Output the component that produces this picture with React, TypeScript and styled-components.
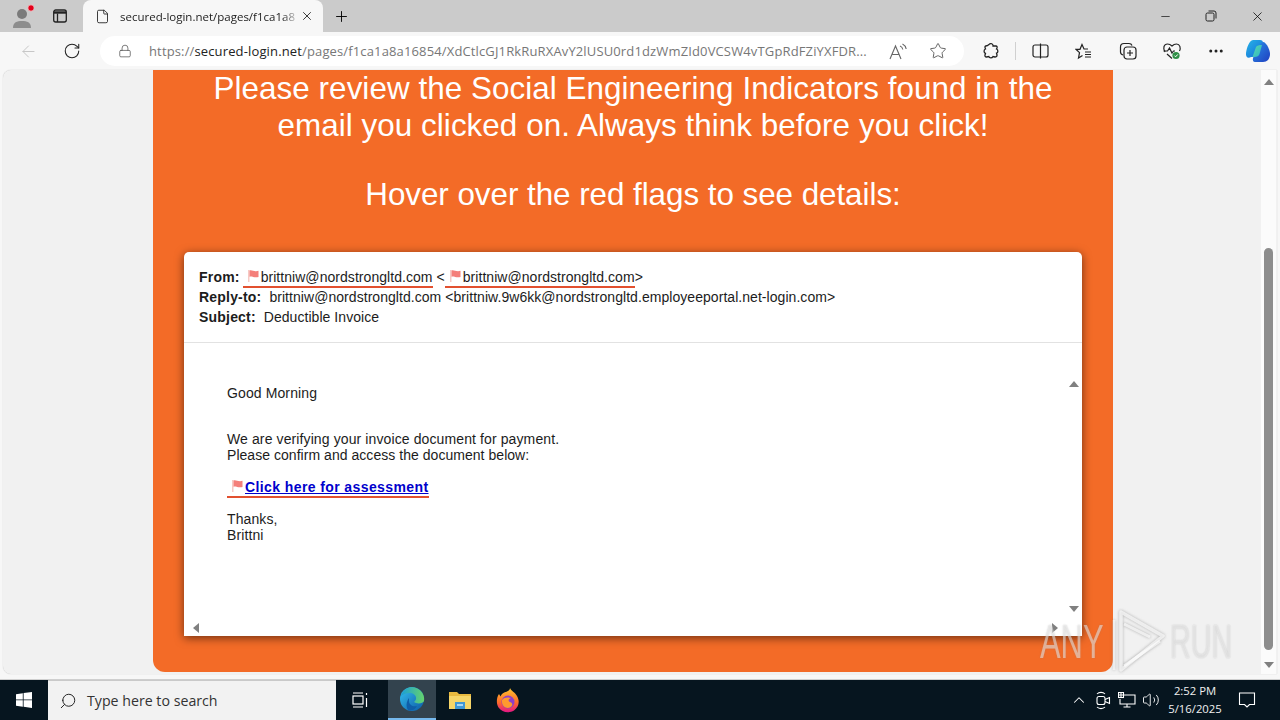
import React from 'react';
import styled, { createGlobalStyle } from 'styled-components';
import { ArrowLeft, RotateCw, Lock, Star, File, X, Plus, Minus, Search, MoreHorizontal, ChevronUp, Volume2 } from 'lucide-react';

const GlobalStyle = createGlobalStyle`
  html, body { margin: 0; padding: 0; width: 1280px; height: 720px; overflow: hidden; }
  body { font-family: 'Liberation Sans', Arial, sans-serif; background: #f7f7f7; }
  * { box-sizing: border-box; }
`;

const Screen = styled.div`
  width: 1280px;
  height: 720px;
  display: flex;
  flex-direction: column;
  position: relative;
`;

const TabStrip = styled.div`
  height: 32px;
  background: #cbcbcb;
  display: flex;
  align-items: flex-end;
  flex-shrink: 0;
`;

const ProfileSlot = styled.div`
  width: 44px;
  height: 32px;
  display: flex;
  align-items: center;
  justify-content: center;
`;

const TabActionsSlot = styled.div`
  width: 39px;
  height: 32px;
  display: flex;
  align-items: center;
  padding-left: 8px;
`;

const Tab = styled.div`
  width: 240px;
  height: 32px;
  background: #f7f7f7;
  border-radius: 8px 8px 0 0;
  display: flex;
  align-items: center;
  padding: 0 9px 0 12px;
  color: #222;
`;

const TabTitle = styled.span`
  flex: 1;
  margin-left: 10px;
  font-family: 'Open Sans', sans-serif;
  font-size: 11.5px;
  white-space: nowrap;
  -webkit-mask-image: linear-gradient(to right, #000 90%, transparent 100%);
  mask-image: linear-gradient(to right, #000 90%, transparent 100%);
`;

const NewTab = styled.div`
  width: 36px;
  height: 32px;
  display: flex;
  align-items: center;
  justify-content: center;
`;

const WindowControls = styled.div`
  margin-left: auto;
  display: flex;
  height: 32px;
  align-items: center;
`;

const WindowButton = styled.div`
  width: 46px;
  height: 32px;
  display: flex;
  align-items: center;
  justify-content: center;
`;

const Toolbar = styled.div`
  height: 38px;
  background: #f7f7f7;
  display: flex;
  align-items: center;
  flex-shrink: 0;
  padding-left: 6px;
`;

const NavButton = styled.div`
  width: 44px;
  height: 32px;
  display: flex;
  align-items: center;
  justify-content: center;
`;

const AddressBar = styled.div`
  width: 864px;
  height: 30px;
  margin-left: 6px;
  margin-right: 8px;
  border-radius: 15px;
  background: #fff;
  display: flex;
  align-items: center;
  padding-left: 18px;
`;

const Url = styled.span`
  margin-left: 17px;
  width: 726px;
  font-family: 'Open Sans', sans-serif;
  font-size: 13px;
  letter-spacing: 0.14px;
  color: #777;
  white-space: nowrap;
`;

const UrlHost = styled.span`
  color: #222;
`;

const ReadAloudSlot = styled.div`
  margin-left: 13px;
  width: 20px;
  display: flex;
  align-items: center;
  justify-content: center;
`;

const StarSlot = styled.div`
  margin-left: 21px;
  display: flex;
`;

const ToolbarIcons = styled.div`
  display: flex;
  align-items: center;
  flex: 1;
`;

const ToolSlot = styled.div<{ $w: number }>`
  width: ${({ $w }) => $w}px;
  height: 32px;
  display: flex;
  align-items: center;
  justify-content: center;
`;

const Divider = styled.div`
  width: 1px;
  height: 18px;
  margin-left: 5px;
  background: #d0d0d0;
`;

const Viewport = styled.div`
  flex: 1;
  display: flex;
  min-height: 0;
  background: #f7f7f7;
  padding: 0 3px 5px;
  border-bottom: 1px solid #cfcfcf;
`;

const Page = styled.div`
  flex: 1;
  background: #f1f1f1;
  border-radius: 8px 0 0 8px;
  padding-left: 150px;
  display: flex;
  overflow: hidden;
  box-shadow: 0 0 1px #bbb;
`;

const OrangePanel = styled.div`
  width: 960px;
  height: 602px;
  background: #f36b27;
  border-radius: 0 0 12px 12px;
  padding: 0 31px;
  display: flex;
  flex-direction: column;
`;

const Headline = styled.div`
  color: #fff;
  font-size: 31.4px;
  line-height: 37px;
  text-align: center;
  height: 182px;
  letter-spacing: 0.05px;
`;

const HeadlineGap = styled.div`
  height: 32px;
`;

const HoverLine = styled.div`
  letter-spacing: -0.05px;
`;

const EmailCard = styled.div`
  width: 898px;
  height: 384px;
  background: #fff;
  border-radius: 5px 5px 0 0;
  box-shadow: 0 2px 10px rgba(0, 0, 0, 0.55);
  display: flex;
  flex-direction: column;
  color: #1c1c1c;
`;

const EmailHeader = styled.div`
  height: 91px;
  border-bottom: 1px solid #e2e2e2;
  padding: 15px 15px 0;
  font-size: 14px;
  line-height: 20px;
  letter-spacing: 0.05px;
`;

const HeaderLine = styled.div`
  white-space: nowrap;
  height: 20px;
`;

const HeaderLabel = styled.b<{ $gap?: number }>`
  letter-spacing: 0.2px;
  margin-right: ${({ $gap = 4 }) => $gap}px;
`;

const FlaggedText = styled.span`
  display: inline-block;
  line-height: 18px;
  height: 20px;
  border-bottom: 2px solid #e2502f;
  padding-left: 4px;
`;

const FlagIcon = styled.svg`
  width: 13px;
  height: 14px;
  margin-right: 1px;
  vertical-align: -1px;
`;

const EmailBodyWrap = styled.div`
  flex: 1;
  position: relative;
  padding: 42px 43px 0;
  font-size: 14px;
  line-height: 16px;
  letter-spacing: 0.11px;
`;

const BodyBlock = styled.div<{ $gap: number }>`
  margin-bottom: ${({ $gap }) => $gap}px;
`;

const TightLine = styled.div`
  letter-spacing: 0.04px;
`;

const FlaggedLink = styled.span`
  display: inline-block;
  height: 19px;
  line-height: 16px;
  border-bottom: 2px solid #e2502f;
  padding-left: 4px;
`;

const BlueLink = styled.a`
  color: #0000cc;
  font-weight: bold;
  letter-spacing: 0.4px;
  text-decoration: underline;
`;

const Arrow = styled.div<{ $dir: 'up' | 'down' | 'left' | 'right' }>`
  position: absolute;
  width: 0;
  height: 0;
  ${({ $dir }) =>
    $dir === 'up'
      ? 'border-left:5px solid transparent;border-right:5px solid transparent;border-bottom:6px solid #808080;'
      : $dir === 'down'
      ? 'border-left:5px solid transparent;border-right:5px solid transparent;border-top:6px solid #808080;'
      : $dir === 'left'
      ? 'border-top:5px solid transparent;border-bottom:5px solid transparent;border-right:6px solid #808080;'
      : 'border-top:5px solid transparent;border-bottom:5px solid transparent;border-left:6px solid #808080;'}
`;

const InnerUp = styled(Arrow)`
  right: 3px;
  top: 38px;
`;

const InnerDown = styled(Arrow)`
  right: 3px;
  top: 263px;
`;

const InnerLeft = styled(Arrow)`
  left: 9px;
  bottom: 3px;
`;

const InnerRight = styled(Arrow)`
  right: 24px;
  bottom: 3px;
`;

const Scrollbar = styled.div`
  width: 15px;
  margin-left: auto;
  margin-right: 1px;
  position: relative;
  display: flex;
  flex-direction: column;
  align-items: center;
  background: #fbfbfb;
`;

const ScrollUp = styled(Arrow)`
  top: 9px;
`;

const ScrollDown = styled(Arrow)`
  bottom: 6px;
`;

const ScrollThumb = styled.div`
  position: absolute;
  top: 178px;
  width: 9px;
  height: 402px;
  left: 3px;
  background: #8d8d8d;
  border-radius: 5px;
`;

const Taskbar = styled.div`
  height: 40px;
  background: #06151f;
  display: flex;
  align-items: center;
  color: #fff;
  flex-shrink: 0;
`;

const StartButton = styled.div`
  width: 48px;
  height: 40px;
  display: flex;
  align-items: center;
  justify-content: center;
`;

const SearchBox = styled.div`
  width: 288px;
  height: 40px;
  background: #f2f2f2;
  border-top: 1px solid #c9c9c9;
  display: flex;
  align-items: center;
  padding-left: 11px;
  color: #222;
`;

const SearchGlass = styled(Search)`
  transform: scaleX(-1);
`;

const SearchText = styled.span`
  margin-left: 10px;
  font-family: 'Open Sans', sans-serif;
  font-size: 14.2px;
  color: #333;
`;

const TaskSlot = styled.div<{ $active?: boolean; $after?: number }>`
  width: 48px;
  height: 40px;
  margin-right: ${({ $after = 0 }) => $after}px;
  display: flex;
  align-items: center;
  justify-content: center;
  background: ${({ $active }) => ($active ? '#33434e' : 'transparent')};
  border-bottom: ${({ $active }) => ($active ? '2px solid #76b9ed' : 'none')};
`;

const Tray = styled.div`
  margin-left: auto;
  display: flex;
  align-items: center;
  height: 40px;
  padding-right: 13px;
`;

const TraySlot = styled.div<{ $w: number }>`
  width: ${({ $w }) => $w}px;
  height: 40px;
  display: flex;
  align-items: center;
  justify-content: center;
`;

const Clock = styled.div`
  width: 64px;
  text-align: center;
  font-family: 'Open Sans', sans-serif;
  font-size: 11.3px;
  line-height: 18px;
  color: #f0f0f0;
`;

const Watermark = styled.div`
  position: absolute;
  left: 1040px;
  top: 607px;
  height: 68px;
  display: flex;
  align-items: center;
  pointer-events: none;
`;

const WatermarkText = styled.span`
  font-family: 'Liberation Sans', sans-serif;
  font-size: 49px;
  transform: scaleX(0.63);
  transform-origin: left center;
  width: 63px;
  color: rgba(255, 255, 255, 0.45);
  text-shadow: 0 0 2px rgba(130, 130, 130, 0.4);
`;

const WatermarkRun = styled(WatermarkText)`
  margin-left: 4px;
  transform: scaleX(0.585);
`;

const WatermarkMark = styled.svg`
  margin-left: 9px;
  width: 54px;
  height: 66px;
  filter: drop-shadow(0 0 1.5px rgba(110, 110, 110, 0.7));
`;

const Flag = () => (
  <FlagIcon viewBox="0 0 13 14">
    <rect x="1" y="1" width="1.5" height="12" fill="#f6c9c4" />
    <path d="M2.5 1.5 C5 0.5 7 3 11.5 1.8 L11.5 8 C7 9.2 5 6.8 2.5 7.8 Z" fill="#f47f7a" />
  </FlagIcon>
);

const Avatar = () => (
  <svg width="24" height="26" viewBox="0 0 24 26">
    <circle cx="12" cy="11" r="5" fill="#7b7b7b" />
    <path d="M3 25 C3 19 7 18 12 18 C17 18 21 19 21 25 Z" fill="#8d8d8d" />
    <circle cx="21" cy="5" r="3.2" fill="#e3001b" stroke="#f3d0d0" strokeWidth="0.8" />
  </svg>
);

const TabsIcon = () => (
  <svg width="16" height="16" viewBox="0 0 16 16" fill="none" stroke="#222" strokeWidth="1.3">
    <rect x="1.7" y="2" width="12.6" height="12" rx="2" />
    <path d="M2 4.5 H14" strokeWidth="2.4" />
    <path d="M5.5 5.5 V14" />
  </svg>
);

const RestoreIcon = () => (
  <svg width="12" height="12" viewBox="0 0 12 12" fill="none" stroke="#222" strokeWidth="1">
    <rect x="1" y="3" width="8" height="8" rx="1.5" />
    <path d="M3.5 1 H9 A2 2 0 0 1 11 3 V8.5" />
  </svg>
);

const ReadAloudIcon = () => (
  <svg width="19" height="17" viewBox="0 0 19 17" fill="none" stroke="#666" strokeWidth="1.1">
    <path d="M1 16 L6.5 3 L12 16 M3 11.5 H10" />
    <path d="M11 3 C12.500 3.500 13.500 4.800 13.800 6.500 M13.500 1 C15.500 2 16.800 3.800 17.200 6" />
  </svg>
);

const ExtensionIcon = () => (
  <svg width="18" height="18" viewBox="0 0 18 18" fill="none" stroke="#222" strokeWidth="1.3">
    <path d="M7 2.5 C8 1 10.5 1.3 11 3.2 L11 4 L14 4 C15 4 15.3 5 15 6 L14.5 7 C16.3 7.8 16.3 10.5 14.5 11.2 L15 13 C15.2 14.5 14 15 13 15 L11 14.6 C10 16.3 7.5 16.3 6.8 14.6 L4.5 15 C3.2 15 2.7 14 3 13 L3.5 11.3 C1.6 10.5 1.6 7.8 3.5 7 L3 5.5 C2.8 4.3 3.7 3.6 5 3.8 Z" />
  </svg>
);

const SplitIcon = () => (
  <svg width="17" height="16" viewBox="0 0 17 16" fill="none" stroke="#222" strokeWidth="1.2">
    <rect x="1" y="2" width="15" height="12" rx="2" />
    <path d="M8.5 0.5 V15.5" />
  </svg>
);

const FavoritesIcon = () => (
  <svg width="18" height="17" viewBox="0 0 18 17" fill="none" stroke="#222" strokeWidth="1.2">
    <path d="M13 6 L9 6 L7 1.5 L5 6.300 L1 6.300 L4.500 9.600 L3.500 15 L7.500 12.500" />
    <path d="M10 9 H16 M10 11.500 H16 M10 14 H16" />
  </svg>
);

const CollectionsIcon = () => (
  <svg width="18" height="18" viewBox="0 0 18 18" fill="none" stroke="#222" strokeWidth="1.2">
    <path d="M4 13 C2 12.5 1.5 11.5 1.5 10 V5 C1.5 3 3 1.5 5 1.5 H10 C11.5 1.5 12.5 2 13 3.5" />
    <rect x="5" y="5" width="12" height="12" rx="3" />
    <path d="M11 8 V14 M8 11 H14" />
  </svg>
);

const HealthIcon = () => (
  <svg width="20" height="18" viewBox="0 0 20 18" fill="none">
    <path d="M3 10 C0.5 6 2 2 5.5 2 C7.5 2 9 3 10 4 C11 3 12.5 2 14.5 2 C18 2 19 6 17.5 9 M5 12 L10 16.5" stroke="#222" strokeWidth="1.2" />
    <path d="M1.5 9 H5.5 L7.5 6 L10 11 L11.5 9 H13" stroke="#222" strokeWidth="1.2" />
    <circle cx="14" cy="13.5" r="3.6" fill="#2f8f46" />
    <path d="M12.4 13.6 L13.6 14.8 L15.8 12.4" stroke="#fff" strokeWidth="1" />
  </svg>
);

const CopilotIcon = () => (
  <svg width="26" height="24" viewBox="0 0 26 24">
    <defs>
      <linearGradient id="cpA" x1="0" y1="0" x2="1" y2="1">
        <stop offset="0" stopColor="#27b5e6" />
        <stop offset="1" stopColor="#1668d8" />
      </linearGradient>
      <linearGradient id="cpB" x1="0" y1="0" x2="1" y2="1">
        <stop offset="0" stopColor="#2a8fe8" />
        <stop offset="1" stopColor="#1f3fc0" />
      </linearGradient>
      <linearGradient id="cpC" x1="0" y1="0" x2="1" y2="1">
        <stop offset="0" stopColor="#59d7a8" />
        <stop offset="1" stopColor="#2fb6c8" />
      </linearGradient>
    </defs>
    <path d="M8 1 H15 C17 1 18 2 18 4 L14 18 H6 C3 20 0.500 18 1 14 C2 8 4 2 8 1 Z" fill="url(#cpA)" />
    <path d="M19 3 C22 5 25 11 25 15 C25 20 22 23 18 23 H10 C8 23 7.500 21 8 19 L13 8 C15 5 17 3 19 3 Z" fill="url(#cpB)" />
    <path d="M11 8 C12 6.500 14 6 17 6 L14.500 15 C14 17 12 18 9.500 18 H7.500 Z" fill="url(#cpC)" />
  </svg>
);

const WindowsLogo = () => (
  <svg width="16" height="16" viewBox="0 0 16 16" fill="#fff">
    <path d="M0 2.2 L6.8 1.2 V7.500 H0 Z M7.600 1.100 L16 0 V7.500 H7.600 Z M0 8.300 H6.800 V14.700 L0 13.800 Z M7.600 8.300 H16 V16 L7.600 14.800 Z" />
  </svg>
);

const TaskViewIcon = () => (
  <svg width="18" height="18" viewBox="0 0 18 18" fill="none" stroke="#fff" strokeWidth="1.200">
    <rect x="2" y="5" width="10" height="8" />
    <path d="M2 2 H12 M2 16 H12 M15.500 2 V4 M15.500 7 V16" />
  </svg>
);

const EdgeIcon = () => (
  <svg width="26" height="26" viewBox="0 0 26 26">
    <defs>
      <linearGradient id="edA" x1="0" y1="0" x2="1" y2="1">
        <stop offset="0" stopColor="#35c1f1" />
        <stop offset="1" stopColor="#0c59a4" />
      </linearGradient>
      <linearGradient id="edB" x1="0" y1="0" x2="1" y2="0">
        <stop offset="0" stopColor="#1a9ed8" />
        <stop offset="1" stopColor="#66d36b" />
      </linearGradient>
    </defs>
    <circle cx="13" cy="13" r="12" fill="url(#edA)" />
    <path d="M2 10 C4 2 12 0 17 2 C23 4 26 10 25 15 C24 18 17 18 15 16 C19 13 17 8 12 7 C8 6.500 4 8 2 10 Z" fill="url(#edB)" />
    <path d="M10 15 C10 19 14 21 18 20 C16 24 12 25.500 9 24 C7 21 7 16 10 12 Z" fill="#0f5ea8" />
  </svg>
);

const FolderIcon = () => (
  <svg width="24" height="22" viewBox="0 0 24 22">
    <path d="M1 3 H9 L11 5 H23 V20 H1 Z" fill="#e8b93f" />
    <rect x="1" y="7" width="22" height="13" fill="#f6d568" />
    <rect x="7" y="13" width="10" height="7" fill="#3f97d6" />
    <rect x="9" y="15" width="6" height="2" fill="#a9d7f3" />
  </svg>
);

const FirefoxIcon = () => (
  <svg width="24" height="26" viewBox="0 0 24 26">
    <defs>
      <linearGradient id="ffA" x1="0.500" y1="0" x2="0.500" y2="1">
        <stop offset="0" stopColor="#ffc52f" />
        <stop offset="0.600" stopColor="#ff6a2a" />
        <stop offset="1" stopColor="#e31587" />
      </linearGradient>
    </defs>
    <path d="M14 1 C15 4 19 5 21 9 C24 14 23 20 18 23.500 C13 26.500 6 25.500 2.500 20.500 C0 16.500 0.500 10.500 3 7 L4.500 9.500 C6 6 9 5 10 5 C12 4 14 3 14 1 Z" fill="url(#ffA)" />
    <circle cx="12" cy="15" r="6.500" fill="#8f3ec9" />
    <path d="M6 13 C8 10 12 10 15 11 C12 12 12 14 14 15 C17 16 17 19 14 20.500 C10 22 6 19 6 15 Z" fill="#ff9a2e" />
  </svg>
);

const MeetIcon = () => (
  <svg width="18" height="20" viewBox="0 0 18 20" fill="none" stroke="#fff" strokeWidth="1.100">
    <rect x="3" y="6.500" width="8" height="8" rx="2" />
    <path d="M11 9.500 L15.500 7.500 V13.500 L11 11.500" />
    <path d="M3 4 C5 1.800 9 1.800 11 4 M3 17 C5 19.200 9 19.200 11 17" />
  </svg>
);

const NetworkIcon = () => (
  <svg width="18" height="16" viewBox="0 0 18 16" fill="none" stroke="#fff" strokeWidth="1.100">
    <path d="M4.500 3 H17 V12 H2 V7" />
    <path d="M9 12 V15 M5.500 15 H12.500" />
    <rect x="0.500" y="0.500" width="5" height="5" fill="#06151f" />
    <path d="M0.500 3 H5.500 M3 0.500 V5.500" />
  </svg>
);

const NotificationIcon = () => (
  <svg width="18" height="18" viewBox="0 0 18 18" fill="none" stroke="#fff" strokeWidth="1.100">
    <path d="M1.500 2 H16.500 V13.500 H11.500 L9 16 L6.500 13.500 H1.500 Z" />
  </svg>
);

const WatermarkLogo = () => (
  <WatermarkMark viewBox="0 0 54 66" fill="none">
    <path d="M2 12 V62" stroke="rgba(255,255,255,0.6)" strokeWidth="2.500" />
    <path d="M9 4 L51 28 L9 62 V4 Z" stroke="rgba(255,255,255,0.7)" strokeWidth="3.500" strokeLinejoin="round" />
    <path d="M12 16 L38 29 M12 58 L48 33" stroke="rgba(255,255,255,0.7)" strokeWidth="3" />
  </WatermarkMark>
);

export default function App() {
  return (
    <Screen>
      <GlobalStyle />
      <TabStrip>
        <ProfileSlot>
          <Avatar />
        </ProfileSlot>
        <TabActionsSlot>
          <TabsIcon />
        </TabActionsSlot>
        <Tab>
          <File size={15} strokeWidth={1.4} />
          <TabTitle>secured-login.net/pages/f1ca1a8</TabTitle>
          <X size={14} strokeWidth={1.5} />
        </Tab>
        <NewTab>
          <Plus size={17} strokeWidth={1.3} />
        </NewTab>
        <WindowControls>
          <WindowButton>
            <Minus size={13} strokeWidth={1.2} />
          </WindowButton>
          <WindowButton>
            <RestoreIcon />
          </WindowButton>
          <WindowButton>
            <X size={15} strokeWidth={1.2} />
          </WindowButton>
        </WindowControls>
      </TabStrip>
      <Toolbar>
        <NavButton>
          <ArrowLeft size={19} strokeWidth={1.2} color="#c4c4c4" />
        </NavButton>
        <NavButton>
          <RotateCw size={18} strokeWidth={1.4} color="#222" />
        </NavButton>
        <AddressBar>
          <Lock size={14} strokeWidth={1.3} color="#555" />
          <Url>
            https://<UrlHost>secured-login.net</UrlHost>/pages/f1ca1a8a16854/XdCtlcGJ1RkRuRXAvY2lUSU0rd1dzWmZId0VCSW4vTGpRdFZiYXFDR...
          </Url>
          <ReadAloudSlot>
            <ReadAloudIcon />
          </ReadAloudSlot>
          <StarSlot>
            <Star size={18} strokeWidth={1.2} color="#555" />
          </StarSlot>
        </AddressBar>
        <ToolbarIcons>
          <ToolSlot $w={38}>
            <ExtensionIcon />
          </ToolSlot>
          <Divider />
          <ToolSlot $w={48}>
            <SplitIcon />
          </ToolSlot>
          <ToolSlot $w={40}>
            <FavoritesIcon />
          </ToolSlot>
          <ToolSlot $w={48}>
            <CollectionsIcon />
          </ToolSlot>
          <ToolSlot $w={40}>
            <HealthIcon />
          </ToolSlot>
          <ToolSlot $w={48}>
            <MoreHorizontal size={18} strokeWidth={2} color="#222" />
          </ToolSlot>
          <ToolSlot $w={36}>
            <CopilotIcon />
          </ToolSlot>
        </ToolbarIcons>
      </Toolbar>
      <Viewport>
        <Page>
          <OrangePanel>
            <Headline>
              Please review the Social Engineering Indicators found in the
              <br />
              email you clicked on. Always think before you click!
              <HeadlineGap />
              <HoverLine>Hover over the red flags to see details:</HoverLine>
            </Headline>
            <EmailCard>
              <EmailHeader>
                <HeaderLine>
                  <HeaderLabel $gap={-1}>From:</HeaderLabel>{' '}
                  <FlaggedText>
                    <Flag />
                    brittniw@nordstrongltd.com
                  </FlaggedText>{' '}
                  &lt;
                  <FlaggedText>
                    <Flag />
                    brittniw@nordstrongltd.com
                  </FlaggedText>
                  &gt;
                </HeaderLine>
                <HeaderLine>
                  <HeaderLabel>Reply-to:</HeaderLabel> brittniw@nordstrongltd.com
                  &lt;brittniw.9w6kk@nordstrongltd.employeeportal.net-login.com&gt;
                </HeaderLine>
                <HeaderLine>
                  <HeaderLabel>Subject:</HeaderLabel> Deductible Invoice
                </HeaderLine>
              </EmailHeader>
              <EmailBodyWrap>
                <BodyBlock $gap={30}>Good Morning</BodyBlock>
                <BodyBlock $gap={16}>
                  We are verifying your invoice document for payment.
                  <TightLine>Please confirm and access the document below:</TightLine>
                </BodyBlock>
                <BodyBlock $gap={13}>
                  <FlaggedLink>
                    <Flag />
                    <BlueLink>Click here for assessment</BlueLink>
                  </FlaggedLink>
                </BodyBlock>
                <BodyBlock $gap={0}>
                  Thanks,
                  <br />
                  Brittni
                </BodyBlock>
                <InnerUp $dir="up" />
                <InnerDown $dir="down" />
                <InnerLeft $dir="left" />
                <InnerRight $dir="right" />
              </EmailBodyWrap>
            </EmailCard>
          </OrangePanel>
          <Scrollbar>
            <ScrollUp $dir="up" />
            <ScrollThumb />
            <ScrollDown $dir="down" />
          </Scrollbar>
        </Page>
      </Viewport>
      <Taskbar>
        <StartButton>
          <WindowsLogo />
        </StartButton>
        <SearchBox>
          <SearchGlass size={18} strokeWidth={1.3} />
          <SearchText>Type here to search</SearchText>
        </SearchBox>
        <TaskSlot $after={4}>
          <TaskViewIcon />
        </TaskSlot>
        <TaskSlot $active>
          <EdgeIcon />
        </TaskSlot>
        <TaskSlot>
          <FolderIcon />
        </TaskSlot>
        <TaskSlot>
          <FirefoxIcon />
        </TaskSlot>
        <Tray>
          <TraySlot $w={24}>
            <ChevronUp size={18} strokeWidth={1.4} />
          </TraySlot>
          <TraySlot $w={24}>
            <MeetIcon />
          </TraySlot>
          <TraySlot $w={24}>
            <NetworkIcon />
          </TraySlot>
          <TraySlot $w={24}>
            <Volume2 size={18} strokeWidth={1.2} />
          </TraySlot>
          <Clock>
            2:52 PM
            <br />
            5/16/2025
          </Clock>
          <TraySlot $w={40}>
            <NotificationIcon />
          </TraySlot>
        </Tray>
      </Taskbar>
      <Watermark>
        <WatermarkText>ANY</WatermarkText>
        <WatermarkLogo />
        <WatermarkRun>RUN</WatermarkRun>
      </Watermark>
    </Screen>
  );
}
